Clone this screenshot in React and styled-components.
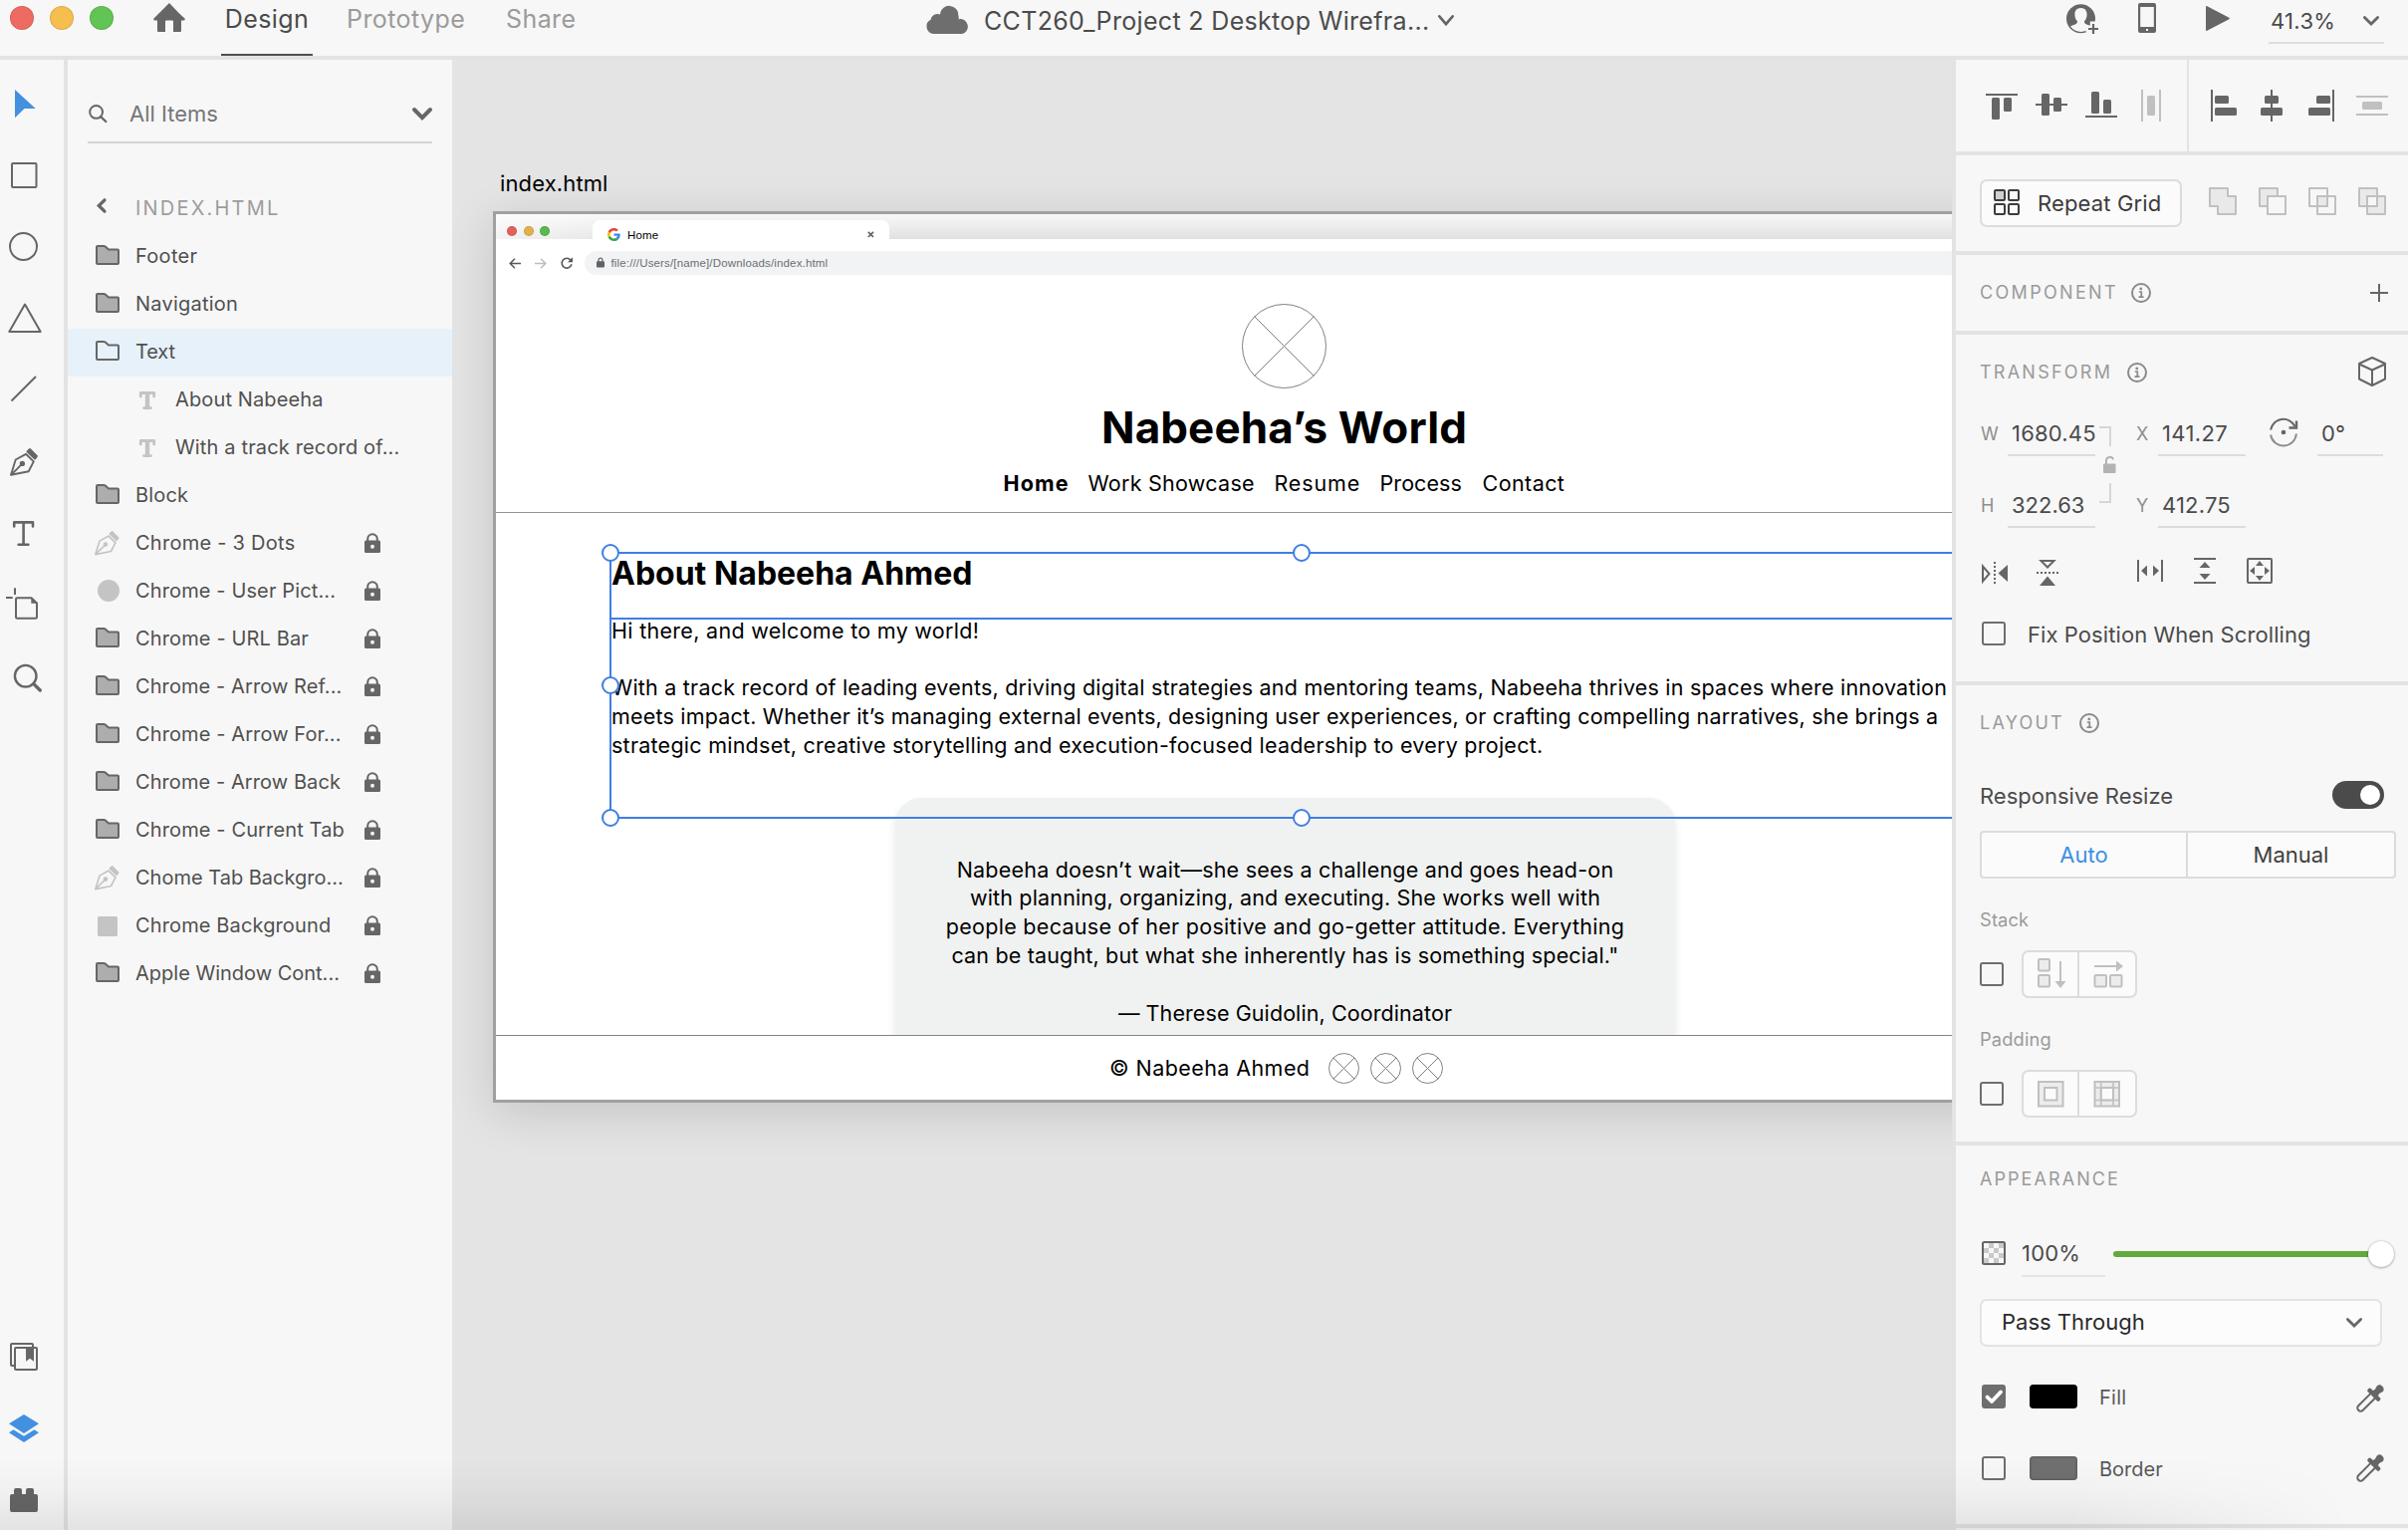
import React from "react";
import styled, { createGlobalStyle, css } from "styled-components";

const c = {
  bg: "#f7f7f7",
  line: "#e3e3e3",
  field: "#dcdcdc",
  icon: "#666666",
  off: "#c0c0c0",
  text: "#4b4b4b",
  muted: "#9a9a9a",
  blue: "#4390df",
  select: "#3f7ee3",
};

const Global = createGlobalStyle`
  * { box-sizing: border-box; }
  body { margin: 0; background: ${c.bg}; }
  svg { display: block; flex: none; overflow: visible; }
`;

const Window = styled.div`
  width: 2418px;
  height: 1536px;
  overflow: hidden;
  position: relative;
  display: flex;
  flex-direction: column;
  background: ${c.bg};
  font-family: Inter, "Liberation Sans", sans-serif;
  color: ${c.text};
`;

const Text = styled.span`
  display: block;
  flex: none;
  white-space: pre;
  font-size: ${(p) => p.$size || 22}px;
  line-height: ${(p) => p.$lh || 42}px;
  letter-spacing: ${(p) => p.$ls || 0}px;
  color: ${(p) => p.$color || "inherit"};
  font-weight: ${(p) => p.$weight || 400};
  ${(p) => p.$w && css`width: ${p.$w}px;`}
  ${(p) => p.$m && css`margin: ${p.$m};`}
`;
const Copy = styled(Text)`
  font-size: 21.5px;
`;

const Icon = styled.svg.attrs((p) => ({
  width: p.$w,
  height: p.$h,
  viewBox: `0 0 ${p.$w} ${p.$h}`,
  fill: "none",
}))`
  color: ${(p) => p.$color || c.icon};
  ${(p) => p.$m && css`margin: ${p.$m};`}
`;

/* ---------- top bar ---------- */
const TopBar = styled.header`
  flex: none;
  height: 60px;
  border-bottom: 4px solid ${c.line};
  display: grid;
  grid-template-columns: 930px 1145px 343px;
`;
const BarGroup = styled.div`
  display: flex;
  align-items: flex-start;
`;
const WindowDots = styled.div`
  display: flex;
  gap: ${(p) => p.$gap}px;
  margin: ${(p) => p.$m};
`;
const Dot = styled.i`
  width: ${(p) => p.$s}px;
  height: ${(p) => p.$s}px;
  border-radius: 50%;
  background: ${(p) => p.$c};
  box-shadow: inset 0 0 0 1px rgba(0, 0, 0, 0.1);
`;
const ModeTab = styled.div`
  width: ${(p) => p.$w}px;
  height: 56px;
  margin-left: ${(p) => p.$ml}px;
  text-align: ${(p) => (p.$active ? "center" : "left")};
  font-size: 25px;
  line-height: 39px;
  letter-spacing: 0.42px;
  color: ${(p) => (p.$active ? "#4b4b4b" : "#9b9b9b")};
  border-bottom: 2px solid ${(p) => (p.$active ? "#505050" : "transparent")};
`;
const ZoomField = styled.div`
  width: 116px;
  height: 44px;
  margin-left: 39px;
  padding: 0 5px 0 2px;
  display: flex;
  justify-content: space-between;
  border-bottom: 2px solid #dedede;
`;

const Body = styled.div`
  display: flex;
  height: 1476px;
`;

/* ---------- tool rail ---------- */
const Rail = styled.nav`
  flex: none;
  width: 68px;
  border-right: 4px solid ${c.line};
  padding-top: 8px;
  display: flex;
  flex-direction: column;
  justify-content: space-between;
  overflow: hidden;
  margin-bottom: -6px;
`;
const ToolGroup = styled.div`
  display: flex;
  flex-direction: column;
`;
const Tool = ({ children, color }) => (
  <Icon $w={64} $h={72} $color={color} stroke="currentColor" strokeWidth="2">
    {children}
  </Icon>
);

const PenShape = () => (
  <g stroke="currentColor" strokeWidth="1.9" strokeLinejoin="round">
    <path d="M1 26.8 L5.7 11.5 L16 5.8 L23.8 13.4 L18.7 23.3 Z" />
    <path d="M1 26.8 L12.3 15.6" />
    <circle cx="12.4" cy="15.4" r="1.7" fill="currentColor" />
    <path d="M17.5 3.2 L20 1 L27 8 L25 10.6 Z" fill="currentColor" />
  </g>
);
const Chevron = ({ w, h, sw, m }) => (
  <Icon $w={w} $h={h} $m={m}>
    <path
      d={`M${sw / 2} ${sw / 2} L${w / 2} ${h - sw * 0.7} L${w - sw / 2} ${sw / 2}`}
      stroke="currentColor"
      strokeWidth={sw}
      strokeLinecap="round"
    />
  </Icon>
);

/* ---------- layers panel ---------- */
const LayersPanel = styled.aside`
  flex: none;
  width: 386px;
`;
const SearchField = styled.div`
  margin: 26px 20px 0;
  height: 58px;
  padding-left: 1px;
  border-bottom: 2px solid #d3d3d3;
  display: flex;
  align-items: center;
`;
const BackRow = styled.div`
  height: 48px;
  margin-top: 41px;
  padding-left: 29px;
  display: flex;
  align-items: center;
`;
const LayerList = styled.div`
  padding-top: 1px;
`;
const LayerRow = styled.div`
  height: 48px;
  display: grid;
  grid-template-columns: ${(p) => (p.$nested ? "16px 20px 200px" : "24px 16px 230px 16px")};
  padding-left: ${(p) => (p.$nested ? 72 : 28)}px;
  align-items: center;
  background: ${(p) => (p.$selected ? "#e7f1fa" : "transparent")};
`;

const FolderIcon = ({ open }) => (
  <Icon $w={24} $h={20} $m="-4px 0 0">
    <path
      d="M1 18 V2 Q1 1 2 1 H8.2 Q9 1 9.8 1.6 L13 4.6 H22 Q23 4.6 23 5.6 V18 Q23 19 22 19 H2 Q1 19 1 18 Z"
      fill={open ? "none" : "#adadad"}
      stroke="currentColor"
      strokeWidth="2"
    />
  </Icon>
);
const LockIcon = () => (
  <Icon $w={16} $h={20} $m="-2px 0 0">
    <path d="M3.2 9 V6 a4.8 4.8 0 0 1 9.6 0 V9" stroke="currentColor" strokeWidth="2" />
    <rect y="7.5" width="16" height="12.5" rx="1.5" fill="currentColor" />
    <circle cx="8" cy="13.7" r="2" fill={c.bg} />
  </Icon>
);
const layerIcons = {
  folder: <FolderIcon />,
  open: <FolderIcon open />,
  text: (
    <Icon $w={16} $h={18} $color="#c4c4c4">
      <path d="M1.3 5 V1.5 H14.7 V5 M4.5 16.6 H11.5" stroke="currentColor" strokeWidth="2.8" strokeLinejoin="round" strokeLinecap="round" />
      <path d="M8 2 V16" stroke="currentColor" strokeWidth="4.4" />
    </Icon>
  ),
  pen: (
    <Icon $w={28} $h={28} $color="#c4c4c4" $m="-2px 0 0 -3px">
      <g transform="translate(2 2) scale(.88)"><PenShape /></g>
    </Icon>
  ),
  circle: (
    <Icon $w={24} $h={22} $color="#c4c4c4" $m="-2px 0 0"><circle cx="13" cy="11" r="11" fill="currentColor" /></Icon>
  ),
  square: (
    <Icon $w={24} $h={20} $color="#c4c4c4"><rect x="2" width="20" height="20" rx="1.5" fill="currentColor" /></Icon>
  ),
};
const layers = [
  { name: "Footer", icon: "folder", ls: 0.3 },
  { name: "Navigation", icon: "folder", ls: 0.23 },
  { name: "Text", icon: "open", selected: true, ls: -0.1 },
  { name: "About Nabeeha", icon: "text", nested: true, ls: 0.13 },
  { name: "With a track record of...", icon: "text", nested: true, ls: 0.15 },
  { name: "Block", icon: "folder", ls: 0.16 },
  { name: "Chrome - 3 Dots", icon: "pen", locked: true, ls: 0.26 },
  { name: "Chrome - User Pict...", icon: "circle", locked: true, ls: 0.13 },
  { name: "Chrome - URL Bar", icon: "folder", locked: true, ls: 0.14 },
  { name: "Chrome - Arrow Ref...", icon: "folder", locked: true, ls: 0.09 },
  { name: "Chrome - Arrow For...", icon: "folder", locked: true, ls: 0.11 },
  { name: "Chrome - Arrow Back", icon: "folder", locked: true, ls: 0.08 },
  { name: "Chrome - Current Tab", icon: "folder", locked: true, ls: 0.13 },
  { name: "Chome Tab Backgro...", icon: "pen", locked: true },
  { name: "Chrome Background", icon: "square", locked: true, ls: 0.13 },
  { name: "Apple Window Cont...", icon: "folder", locked: true },
];

/* ---------- canvas ---------- */
const Canvas = styled.main`
  flex: none;
  width: 1506px;
  padding-left: 41px;
  background: #e4e4e4;
  overflow: hidden;
`;
const Artboard = styled.section`
  position: relative;
  width: 1589px;
  height: 895px;
  margin-top: 13px;
  border: 3px solid #a0a0a0;
  background: #fff;
  box-shadow: 0 10px 44px rgba(0, 0, 0, 0.14);
  color: #000;
`;
const TabStrip = styled.div`
  position: relative;
  z-index: 1;
  height: 25px;
  display: flex;
  background: linear-gradient(100deg, rgba(255,255,255,.6), rgba(255,255,255,0) 10%), linear-gradient(#f8f8f8, #e1e1e1);
  font-family: "Liberation Sans", sans-serif;
`;
const BrowserTab = styled.div`
  width: 298px;
  height: 19px;
  margin: 6px 0 0 43px;
  padding: 0 15px;
  border-radius: 8px 8px 0 0;
  background: #fff;
  display: flex;
  align-items: flex-start;
`;
const AddressRow = styled.div`
  height: 48px;
  padding-left: 13px;
  display: flex;
  align-items: center;
  overflow: hidden;
  font-family: "Liberation Sans", sans-serif;
`;
const UrlPill = styled.div`
  flex: 1;
  height: 24px;
  margin: 0 40px 0 12px;
  padding-left: 12px;
  border-radius: 12px;
  background: #f1f3f4;
  display: flex;
  align-items: center;
`;
const SiteHeader = styled.div`
  height: 227px;
  padding-top: 17px;
  border-bottom: 1px solid #949494;
  display: flex;
  flex-direction: column;
  align-items: center;
`;
const SiteTitle = styled.h1`
  margin: 14px 0 0;
  font: 700 44px/51px Inter, sans-serif;
  letter-spacing: 0.1px;
`;
const SiteNav = styled.div`
  margin-top: 15px;
  display: grid;
  grid-template-columns: 85px 187px 106px 103px 83px;
`;
const SiteBody = styled.div`
  height: 524px;
  padding: 40px 0 0 116px;
  overflow: hidden;
`;
const SectionTitle = styled.h2`
  margin: 0;
  font: 700 32px/41px Inter, sans-serif;
`;
const Paragraph = styled.div`
  margin-top: ${(p) => p.$mt}px;
`;
const QuoteCard = styled.div`
  width: 783px;
  height: 260px;
  margin: 38px 0 0 285px;
  padding-top: 57.5px;
  border-radius: 26px 26px 0 0;
  background: #f0f2f1;
  box-shadow: 0 5px 8px rgba(0, 0, 0, 0.1);
  text-align: center;
`;
const SiteFooter = styled.div`
  height: 65px;
  padding-left: 616px;
  border-top: 1px solid #848484;
  display: flex;
  align-items: center;
`;
const FooterLinks = styled.div`
  display: flex;
  gap: 11px;
`;
const Placeholder = ({ size, k }) => {
  const r = size / 2;
  return (
    <Icon $w={size} $h={size} $color="#808080">
      <circle cx={r} cy={r} r={r - 0.5} stroke="currentColor" />
      <path d={`M${r - k} ${r - k} L${r + k} ${r + k} M${r + k} ${r - k} L${r - k} ${r + k}`} stroke="currentColor" />
    </Icon>
  );
};
const Selection = styled.div`
  position: absolute;
  z-index: 2;
  left: 114px;
  top: 339px;
  width: 1390px;
  height: 268px;
  border: 2px solid ${c.select};
  &::after {
    content: "";
    position: absolute;
    left: 0;
    right: 0;
    top: 64px;
    height: 2px;
    background: ${c.select};
  }
`;
const Handle = styled.i`
  position: absolute;
  z-index: 1;
  left: ${(p) => p.$x};
  top: ${(p) => p.$y};
  width: 18px;
  height: 18px;
  margin: -9px;
  border: 2px solid ${c.select};
  border-radius: 50%;
  background: #fff;
`;

/* ---------- property inspector ---------- */
const Inspector = styled.aside`
  flex: none;
  width: 458px;
  border-left: 4px solid ${c.line};
`;
const Section = styled.section`
  height: ${(p) => p.$h + 4}px;
  border-bottom: 4px solid ${c.line};
  padding-left: ${(p) => (p.$flush ? 0 : 24)}px;
  ${(p) => p.$row && css`display: flex; align-items: center;`}
`;
const AlignGroup = styled.div`
  height: 92px;
  display: flex;
  align-items: center;
  gap: 18px;
  width: ${(p) => p.$w}px;
  padding-left: ${(p) => p.$pl}px;
  border-right: ${(p) => (p.$rule ? 2 : 0)}px solid ${c.line};
`;
const Line = styled.div`
  display: flex;
  align-items: center;
  height: ${(p) => p.$h}px;
  margin-top: ${(p) => p.$mt || 0}px;
  padding-left: ${(p) => p.$pl || 0}px;
`;
const Push = styled.div`
  margin-left: auto;
  margin-right: ${(p) => p.$r}px;
`;
const Heading = ({ children, ls, w }) => (
  <Text $size={18} $lh={24} $ls={ls} $color={c.muted} $w={w}>{children}</Text>
);
const RepeatButton = styled.div`
  width: 203px;
  height: 48px;
  padding-left: 12px;
  border: 2px solid ${c.field};
  border-radius: 7px;
  background: #fbfbfb;
  display: flex;
  align-items: center;
`;
const BooleanGroup = styled.div`
  display: flex;
  gap: 22px;
  margin: -4px 0 0 27px;
`;
const FieldGrid = styled.div`
  margin-top: 3px;
  display: grid;
  grid-template-columns: 28px 88px 40px 23px 88px 24px 28px 20px 66px;
  grid-template-rows: 44px 44px;
  row-gap: 28px;
`;
const Field = styled.div`
  grid-column: ${(p) => p.$col};
  border-bottom: 2px solid ${(p) => p.$line || c.field};
  padding-left: ${(p) => (p.$pl === undefined ? 4 : p.$pl)}px;
  white-space: nowrap;
  font-size: 22px;
  line-height: ${(p) => p.$lh || 43}px;
  letter-spacing: ${(p) => p.$ls || 0}px;
  width: ${(p) => (p.$w ? p.$w + "px" : "auto")};
  height: 44px;
`;
const FieldLabel = styled.div`
  grid-column: ${(p) => p.$col};
  padding-left: 1px;
  font-size: 18px;
  line-height: 43px;
  color: #8e8e8e;
`;
const LinkCell = styled.div`
  grid-column: 3;
  grid-row: 1 / 3;
`;
const CheckBox = styled.div`
  flex: none;
  width: 24px;
  height: 24px;
  border: 2px solid #6e6e6e;
  border-radius: 3px;
  background: ${(p) => (p.$on ? "#6e6e6e" : "transparent")};
`;
const Toggle = styled.div`
  width: 52px;
  height: 28px;
  padding: 4px;
  border-radius: 14px;
  background: #4b4b4b;
  display: flex;
  justify-content: flex-end;
  &::after {
    content: "";
    width: 20px;
    border-radius: 50%;
    background: #fff;
  }
`;
const Segmented = styled.div`
  width: ${(p) => p.$w}px;
  height: 48px;
  margin-top: ${(p) => p.$mt || 0}px;
  margin-left: ${(p) => p.$ml || 0}px;
  border: 2px solid ${c.field};
  border-radius: ${(p) => p.$r}px;
  background: #fbfbfb;
  display: grid;
  grid-template-columns: ${(p) => p.$cols};
  color: #3f3f3f;
  text-align: center;
`;
const Segment = styled.div`
  height: 44px;
  border-left: ${(p) => (p.$rule ? 2 : 0)}px solid ${c.field};
  font-size: 22px;
  line-height: 45px;
  color: ${(p) => (p.$on ? "#3f8fe5" : "inherit")};
`;
const Slider = styled.div`
  position: relative;
  width: 269px;
  height: 6px;
  margin: -2px 0 0 8px;
  border-radius: 3px;
  background: #61aa3d;
  &::after {
    content: "";
    position: absolute;
    right: -13px;
    top: -10px;
    width: 26px;
    height: 26px;
    border-radius: 50%;
    background: #fff;
    box-shadow: 0 0 2px rgba(0, 0, 0, 0.25), 0 1px 3px rgba(0, 0, 0, 0.25);
  }
`;
const Select = styled.div`
  width: 404px;
  height: 48px;
  margin-top: 22px;
  padding: 0 18px 0 20px;
  border: 2px solid ${c.line};
  border-radius: 7px;
  background: #fcfcfc;
  display: flex;
  align-items: center;
  justify-content: space-between;
`;
const Swatch = styled.div`
  width: 48px;
  height: 24px;
  margin: 0 22px 0 24px;
  border-radius: 4px;
  background: ${(p) => p.$c};
  box-shadow: inset 0 0 3px rgba(0, 0, 0, 0.4);
`;
const BottomShade = styled.div`
  position: absolute;
  left: 0;
  bottom: 0;
  width: 2360px;
  height: 72px;
  background: linear-gradient(rgba(0, 0, 0, 0), rgba(0, 0, 0, 0.025) 45%, rgba(0, 0, 0, 0.08));
  mask-image: linear-gradient(to right, #000 88%, transparent);
  pointer-events: none;
`;

const Info = ({ m }) => (
  <Icon $w={20} $h={20} $color="#8a8a8a" $m={m}>
    <circle cx="10" cy="10" r="9" stroke="currentColor" strokeWidth="2" />
    <circle cx="9.8" cy="5.9" r="1.4" fill="currentColor" />
    <path d="M7.8 9 H10.3 V14 M7.5 14.2 H12.5" stroke="currentColor" strokeWidth="1.7" />
  </Icon>
);
const AlignIcon = ({ lines, bars, off }) => (
  <Icon $w={32} $h={32} $color={off ? c.off : c.icon}>
    {lines.map((r, i) => <rect key={"l" + i} x={r[0]} y={r[1]} width={r[2]} height={r[3]} fill="currentColor" />)}
    {bars.map((r, i) => <rect key={"b" + i} x={r[0]} y={r[1]} width={r[2]} height={r[3]} rx="1.5" fill="currentColor" />)}
  </Icon>
);
const Bool = ({ children }) => (
  <Icon $w={28} $h={28} $color={c.off} stroke="currentColor" strokeWidth="2" strokeLinejoin="round">{children}</Icon>
);
const Eyedropper = ({ dy }) => (
  <Icon $w={28} $h={28} $m={`${dy}px 0 0`}>
    <g transform="translate(14 14) rotate(45)">
      <path d="M-3.2 -4 V13.5 a3.2 3.2 0 0 0 6.4 0 V-4" stroke="currentColor" strokeWidth="2" />
      <rect x="-8.2" y="-7.6" width="16.4" height="4.4" rx="1.8" fill="currentColor" />
      <path d="M-4.6 -4 L-3 -10 L-4.2 -14 A4.3 4.3 0 0 1 4.2 -14 L3 -10 L4.6 -4 Z" fill="currentColor" />
    </g>
  </Icon>
);

export default function App() {
  return (
    <Window>
      <Global />
      <TopBar>
        <BarGroup>
          <WindowDots $gap={16} $m="6px 0 0 10px">
            <Dot $s={24} $c="#ed6b60" />
            <Dot $s={24} $c="#f5be4f" />
            <Dot $s={24} $c="#62c454" />
          </WindowDots>
          <Icon $w={32} $h={29} $m="3px 0 0 40px">
            <path d="M16 0 L25.5 10 L32 16 L31 17.5 H28 V28 Q28 29 27 29 H20 V18.5 Q20 17.5 19 17.5 H13 Q12 17.5 12 18.5 V29 H5 Q4 29 4 28 V17.5 H1 L0 16 Z" fill="currentColor" />
          </Icon>
          <ModeTab $active $w={92} $ml={36}>Design</ModeTab>
          <ModeTab $w={120} $ml={34}>Prototype</ModeTab>
          <ModeTab $w={80} $ml={40}>Share</ModeTab>
        </BarGroup>
        <BarGroup>
          <Icon $w={42} $h={27} $m="7px 0 0" $color="#6e6e6e">
            <path d="M7.5 27 A7.5 7.5 0 0 1 4.6 12.8 A7 7 0 0 1 14 7.4 A9.2 9.2 0 0 1 32.4 8.8 Q33 11 32.6 12.2 A7.5 7.5 0 0 1 36 27 Z" fill="currentColor" />
          </Icon>
          <Text $size={25} $ls={0.33} $w={446} $m="0 0 0 16px">CCT260_Project 2 Desktop Wirefra...</Text>
          <Chevron w={16} h={11} sw={2.6} m="15px 0 0 10px" />
        </BarGroup>
        <BarGroup>
          <Icon $w={33} $h={30} $m="4px 0 0">
            <circle cx="14.5" cy="14.7" r="14.5" fill="currentColor" />
            <path d="M14.5 4 C18.5 4 20.6 6.8 20.6 10.4 C20.6 13.4 19.4 16 18 17.3 C17.6 20.4 21 20.4 25 22.6 A13 13 0 0 1 4 22.6 C8 20.4 11.4 20.4 11 17.3 C9.6 16 8.4 13.4 8.4 10.4 C8.4 6.8 10.5 4 14.5 4 Z" fill={c.bg} />
            <path d="M27 17.5 V32 M19.5 25 H34" stroke={c.bg} strokeWidth="6.5" />
            <path d="M27 20 V30 M22 25 H32" stroke="currentColor" strokeWidth="2.2" />
          </Icon>
          <Icon $w={18} $h={30} $m="3px 0 0 39px">
            <path fillRule="evenodd" d="M2 0 H16 Q18 0 18 2 V28 Q18 30 16 30 H2 Q0 30 0 28 V2 Q0 0 2 0 Z M2.2 4 V24 H15.8 V4 Z M8 26 V28 H10 V26 Z" fill="currentColor" />
          </Icon>
          <Icon $w={24} $h={25} $m="6px 0 0 50px">
            <path d="M0 1 Q0 -.3 1.3 .3 L23.4 11.8 Q24.4 12.5 23.4 13.2 L1.3 24.7 Q0 25.3 0 24 Z" fill="currentColor" />
          </Icon>
          <ZoomField>
            <Text $ls={0.3}>41.3%</Text>
            <Chevron w={16} h={10} sw={2.8} m="16px 0 0" />
          </ZoomField>
        </BarGroup>
      </TopBar>

      <Body>
        <Rail>
          <ToolGroup>
            <Tool color={c.blue}><path d="M15 22 L35.7 41 H24.5 L15 50.3 Z" fill="currentColor" stroke="none" /></Tool>
            <Tool><rect x="12" y="24" width="24.5" height="24" rx="1" /></Tool>
            <Tool><circle cx="23.5" cy="35.5" r="13.5" /></Tool>
            <Tool><path d="M25 21.5 L40.7 49 H9.3 Z" strokeLinejoin="round" /></Tool>
            <Tool><path d="M11.5 46.5 L36 22" /></Tool>
            <Tool><g transform="translate(10 22)"><PenShape /></g></Tool>
            <Tool><path d="M14.2 28.5 V24.4 H33 V28.5 M23.6 25 V46.5 M18.6 46.8 H28.4" strokeWidth="2.6" strokeLinejoin="round" strokeLinecap="round" /></Tool>
            <Tool>
              <path d="M6 28 H12.7 M15 18.2 V25" />
              <path d="M17.3 28.3 H31.5 L37 33.5 V47.5 Q37 48.8 35.8 48.8 H17.2 Q16 48.8 16 47.5 V29.5 Q16 28.3 17.3 28.3 Z" />
              <path d="M31.3 28 V33.7 H37.5 Z" fill="currentColor" stroke="none" />
            </Tool>
            <Tool>
              <circle cx="25.7" cy="34.7" r="10.8" strokeWidth="2.4" />
              <path d="M33.8 42.6 L40.3 49" strokeWidth="3.4" strokeLinecap="round" />
            </Tool>
          </ToolGroup>
          <ToolGroup>
            <Tool>
              <path d="M15 45 H12 Q11 45 11 44 V24 Q11 23 12 23 H32 Q33 23 33 24 V27" />
              <rect x="15" y="27" width="22" height="22" rx="1" />
              <path d="M26 27 H34 V40.8 L30 37.8 L26 40.8 Z" fill="currentColor" stroke="none" />
            </Tool>
            <Tool color={c.blue}>
              <g fill="currentColor" stroke="none">
                <path d="M24 22 L39 31.3 L24 41 L9 31.3 Z" />
                <path d="M9 40.2 L13.5 37.2 L24 43.8 L34.5 37.2 L39 40.2 L24 50 Z" />
              </g>
            </Tool>
            <Tool>
              <path d="M12 30 H14 V26 Q14 24 16 24 H20 Q22 24 22 26 V30 H26 V26 Q26 24 28 24 H32 Q34 24 34 26 V30 H36 Q38 30 38 32 V46 Q38 48 36 48 H12 Q10 48 10 46 V32 Q10 30 12 30 Z" fill="currentColor" stroke="none" />
            </Tool>
          </ToolGroup>
        </Rail>

        <LayersPanel>
          <SearchField>
            <Icon $w={19} $h={18}>
              <circle cx="7.6" cy="7.4" r="6.4" stroke="currentColor" strokeWidth="2" />
              <path d="M12 12 L17.3 17" stroke="currentColor" strokeWidth="2.4" strokeLinecap="round" />
            </Icon>
            <Text $color="#767676" $m="0 0 0 22px">All Items</Text>
            <Push $r={0}><Chevron w={20} h={13} sw={4} /></Push>
          </SearchField>
          <BackRow>
            <Icon $w={10} $h={15} $m="-5px 29px 0 0">
              <path d="M8 1.8 L2.2 7.5 L8 13.2" stroke="currentColor" strokeWidth="3.2" strokeLinecap="round" />
            </Icon>
            <Text $size={20} $ls={2.2} $color="#9d9d9d">INDEX.HTML</Text>
          </BackRow>
          <LayerList>
            {layers.map((l) => (
              <LayerRow key={l.name} $nested={l.nested} $selected={l.selected}>
                {layerIcons[l.icon]}
                <span />
                <Text $size={20} $ls={l.ls} $lh={46} $color="#505050" $m="0 0 2px">{l.name}</Text>
                {l.locked && <LockIcon />}
              </LayerRow>
            ))}
          </LayerList>
        </LayersPanel>

        <Canvas>
          <Text $lh={30} $ls={0.13} $color="#000" $m="109px 0 0 7px">index.html</Text>
          <Artboard>
            <TabStrip>
              <WindowDots $gap={6.5} $m="11.5px 0 0 11px">
                <Dot $s={10} $c="#e0625a" />
                <Dot $s={10} $c="#e3b14b" />
                <Dot $s={10} $c="#58b94e" />
              </WindowDots>
              <BrowserTab>
                <Icon $w={13} $h={13} $m="8px 0 0">
                  <g transform="scale(.2708)">
                    <path fill="#EA4335" d="M24 9.5c3.54 0 6.71 1.22 9.21 3.6l6.85-6.85C35.9 2.38 30.47 0 24 0 14.62 0 6.51 5.38 2.56 13.22l7.98 6.19C12.43 13.72 17.74 9.5 24 9.5z" />
                    <path fill="#4285F4" d="M46.98 24.55c0-1.57-.15-3.09-.38-4.55H24v9.02h12.94c-.58 2.96-2.26 5.48-4.78 7.18l7.73 6c4.51-4.18 7.09-10.36 7.09-17.65z" />
                    <path fill="#FBBC05" d="M10.53 28.59c-.48-1.45-.76-2.99-.76-4.59s.27-3.14.76-4.59l-7.98-6.19C.92 16.46 0 20.12 0 24c0 3.88.92 7.54 2.56 10.78l7.97-6.19z" />
                    <path fill="#34A853" d="M24 48c6.48 0 11.93-2.13 15.89-5.81l-7.73-6c-2.15 1.45-4.92 2.3-8.16 2.3-6.26 0-11.57-4.22-13.47-9.91l-7.98 6.19C6.51 42.62 14.62 48 24 48z" />
                  </g>
                </Icon>
                <Text $size={11.5} $lh={30} $ls={0.15} $m="0 0 0 7px">Home</Text>
                <Push $r={0}>
                  <Icon $w={7} $h={7} $m="11px 0 0" $color="#5f6368"><path d="M.8 .8 L6 6 M6 .8 L.8 6" stroke="currentColor" strokeWidth="1.7" /></Icon>
                </Push>
              </BrowserTab>
            </TabStrip>
            <AddressRow>
              <Icon $w={12} $h={11} $color="#55585c"><path d="M12 5.5 H1.5 M6 .7 L1.2 5.5 L6 10.3" stroke="currentColor" strokeWidth="1.5" /></Icon>
              <Icon $w={12} $h={11} $m="0 0 0 14px" $color="#bdbdbd"><path d="M0 5.5 H10.5 M6 .7 L10.8 5.5 L6 10.3" stroke="currentColor" strokeWidth="1.5" /></Icon>
              <Icon $w={12} $h={12} $m="0 0 0 14px" $color="#55585c">
                <path d="M10 3.2 A4.9 4.9 0 1 0 10.9 7.3" stroke="currentColor" strokeWidth="1.6" />
                <path d="M12 .2 V5.2 H7 Z" fill="currentColor" />
              </Icon>
              <UrlPill>
                <Icon $w={8} $h={11} $m="-1px 0 0" $color="#5f6368">
                  <path d="M2 5 V3.2 a2 2 0 0 1 4 0 V5" stroke="currentColor" strokeWidth="1.2" />
                  <rect y="4.2" width="8" height="6.4" rx="1" fill="currentColor" />
                </Icon>
                <Text $size={11.5} $lh={24} $ls={0.15} $color="#6c6f73" $m="0 0 0 6.5px">file:///Users/[name]/Downloads/index.html</Text>
              </UrlPill>
            </AddressRow>

            <SiteHeader>
              <Placeholder size={85} k={30} />
              <SiteTitle>Nabeeha’s World</SiteTitle>
              <SiteNav>
                <Copy $lh={30} $ls={1.1} $weight={700}>Home</Copy>
                <Copy $lh={30} $ls={0.26}>Work Showcase</Copy>
                <Copy $lh={30} $ls={0.85}>Resume</Copy>
                <Copy $lh={30} $ls={0.08}>Process</Copy>
                <Copy $lh={30} $ls={0.43}>Contact</Copy>
              </SiteNav>
            </SiteHeader>

            <SiteBody>
              <SectionTitle>About Nabeeha Ahmed</SectionTitle>
              <Paragraph $mt={23}>
                <Copy $lh={29} $ls={0.3}>Hi there, and welcome to my world!</Copy>
              </Paragraph>
              <Paragraph $mt={28}>
                <Copy $lh={29} $ls={0.218}>With a track record of leading events, driving digital strategies and mentoring teams, Nabeeha thrives in spaces where innovation</Copy>
                <Copy $lh={29} $ls={0.188}>meets impact. Whether it’s managing external events, designing user experiences, or crafting compelling narratives, she brings a</Copy>
                <Copy $lh={29} $ls={0.25}>strategic mindset, creative storytelling and execution-focused leadership to every project.</Copy>
              </Paragraph>
              <QuoteCard>
                <Copy $lh={28.8} $ls={0.215}>Nabeeha doesn’t wait—she sees a challenge and goes head-on</Copy>
                <Copy $lh={28.8} $ls={0.155}>with planning, organizing, and executing. She works well with</Copy>
                <Copy $lh={28.8} $ls={0.285}>people because of her positive and go-getter attitude. Everything</Copy>
                <Copy $lh={28.8} $ls={0.165}>can be taught, but what she inherently has is something special."</Copy>
                <Copy $lh={28.8} $ls={0.089} $m="29px 0 0">— Therese Guidolin, Coordinator</Copy>
              </QuoteCard>
            </SiteBody>

            <SiteFooter>
              <Copy $lh={30} $ls={0.42} $w={220}>© Nabeeha Ahmed</Copy>
              <FooterLinks>
                <Placeholder size={31} k={10.5} />
                <Placeholder size={31} k={10.5} />
                <Placeholder size={31} k={10.5} />
              </FooterLinks>
            </SiteFooter>

            <Selection>
              <Handle $x="-1px" $y="-1px" />
              <Handle $x="50%" $y="-1px" />
              <Handle $x="-1px" $y="50%" />
              <Handle $x="-1px" $y="calc(100% + 1px)" />
              <Handle $x="50%" $y="calc(100% + 1px)" />
            </Selection>
          </Artboard>
        </Canvas>

        <Inspector>
          <Section $h={92} $flush $row>
            <AlignGroup $w={234} $pl={30} $rule>
              <AlignIcon lines={[[0, 4, 32, 2]]} bars={[[6, 8, 8, 22], [18, 8, 8, 14]]} />
              <AlignIcon lines={[[0, 14, 32, 2]]} bars={[[6, 4, 8, 22], [18, 8, 8, 14]]} />
              <AlignIcon lines={[[0, 26, 32, 2]]} bars={[[6, 2, 8, 22], [18, 10, 8, 14]]} />
              <AlignIcon off lines={[[6, 0, 2, 32], [24, 0, 2, 32]]} bars={[[12, 6, 8, 20]]} />
            </AlignGroup>
            <AlignGroup $w={220} $pl={18}>
              <AlignIcon lines={[[4, 0, 2, 32]]} bars={[[8, 6, 14, 8], [8, 18, 22, 8]]} />
              <AlignIcon lines={[[14, 0, 2, 32]]} bars={[[8, 6, 14, 8], [4, 18, 22, 8]]} />
              <AlignIcon lines={[[26, 0, 2, 32]]} bars={[[10, 6, 14, 8], [2, 18, 22, 8]]} />
              <AlignIcon off lines={[[0, 6, 32, 2], [0, 24, 32, 2]]} bars={[[6, 12, 20, 8]]} />
            </AlignGroup>
          </Section>

          <Section $h={96} $row>
            <RepeatButton>
              <Icon $w={26} $h={26} $color="#3c3c3c" $m="-2px 0 0" stroke="currentColor" strokeWidth="2">
                <rect x="1" y="1" width="10" height="10" rx="1" fill="#cfcfcf" />
                <rect x="15" y="1" width="10" height="10" rx="1" />
                <rect x="1" y="15" width="10" height="10" rx="1" />
                <rect x="15" y="15" width="10" height="10" rx="1" />
              </Icon>
              <Text $ls={0.15} $color="#3c3c3c" $m="0 0 0 18px">Repeat Grid</Text>
            </RepeatButton>
            <BooleanGroup>
              <Bool><path d="M1 1 H19 V9 H27 V27 H9 V19 H1 Z" fill="#e9e9e9" /></Bool>
              <Bool>
                <path d="M9 19 H1 V1 H19 V9" fill="#e9e9e9" />
                <rect x="9" y="9" width="18" height="18" fill={c.bg} />
              </Bool>
              <Bool>
                <rect x="1" y="1" width="18" height="18" />
                <rect x="9" y="9" width="18" height="18" />
                <rect x="9" y="9" width="10" height="10" fill="#e9e9e9" />
              </Bool>
              <Bool>
                <rect x="1" y="1" width="18" height="18" fill="#e9e9e9" />
                <rect x="9" y="9" width="18" height="18" fill="#e9e9e9" />
                <rect x="9" y="9" width="10" height="10" fill={c.bg} />
              </Bool>
            </BooleanGroup>
          </Section>

          <Section $h={76} $row>
            <Heading ls={2.33} w={152}>COMPONENT</Heading>
            <Info />
            <Push $r={20}>
              <Icon $w={18} $h={18}><path d="M9 0 V18 M0 9 H18" stroke="currentColor" strokeWidth="2" /></Icon>
            </Push>
          </Section>

          <Section $h={348}>
            <Line $h={75}>
              <Heading ls={2.25} w={148}>TRANSFORM</Heading>
              <Info />
              <Push $r={22}>
                <Icon $w={28} $h={30} $m="-2px 0 0" stroke="currentColor" strokeWidth="2" strokeLinejoin="round">
                  <path d="M14 1 L27 7 V22.5 L14 29 L1 22.5 V7 Z M1 7.5 L14 13.5 L27 7.5 M14 13.5 V29" />
                </Icon>
              </Push>
            </Line>
            <FieldGrid>
              <FieldLabel>W</FieldLabel>
              <Field $ls={0.2}>1680.45</Field>
              <LinkCell>
                <Icon $w={40} $h={116} $color="#d6d6d6">
                  <path d="M4 15 H15 V34 M15 71 V90 H4" stroke="currentColor" strokeWidth="2" />
                  <g color="#b3b3b3">
                    <rect x="8" y="51.5" width="12.5" height="9.5" rx="1" fill="currentColor" />
                    <path d="M11 52 V48.5 a3.6 3.6 0 0 1 7 -1.2" stroke="currentColor" strokeWidth="2" />
                  </g>
                </Icon>
              </LinkCell>
              <FieldLabel $col={4}>X</FieldLabel>
              <Field $ls={0.37}>141.27</Field>
              <span />
              <Icon $w={28} $h={28} $m="6px 0 0">
                <path d="M1.1 11.5 A13 13 0 0 1 25.5 8" stroke="currentColor" strokeWidth="2" />
                <path d="M1.1 16.5 A13 13 0 0 0 26.9 15.5" stroke="#8e8e8e" strokeWidth="2" />
                <path d="M27 2.5 V9.5 H19.5" stroke="currentColor" strokeWidth="2.4" />
                <circle cx="14" cy="14" r="2.3" fill="currentColor" />
              </Icon>
              <span />
              <Field>0°</Field>
              <FieldLabel $col={1}>H</FieldLabel>
              <Field $col={2}>322.63</Field>
              <FieldLabel $col={4}>Y</FieldLabel>
              <Field $ls={0.18}>412.75</Field>
            </FieldGrid>
            <Line $h={32} $mt={28}>
              <Icon $w={32} $h={32} $m="0 20px 0 0">
                <path d="M3 10.5 V25.5 L9.5 18 Z" stroke="currentColor" strokeWidth="2" />
                <path d="M28 9 V26 L18.5 17.5 Z" fill="currentColor" />
                <path d="M15 6 V28" stroke="currentColor" strokeWidth="2" strokeDasharray="2 2" />
              </Icon>
              <Icon $w={32} $h={32} $m="0 71px 0 0">
                <path d="M9.5 5 H22.5 L16 11.5 Z" stroke="currentColor" strokeWidth="2" />
                <path d="M8 30 H24 L16 20.5 Z" fill="currentColor" />
                <path d="M5 17 H27" stroke="currentColor" strokeWidth="2" strokeDasharray="2 2" />
              </Icon>
              <Icon $w={32} $h={32} $m="0 23px 0 0">
                <path d="M4 4 V26 M28 4 V26" stroke="currentColor" strokeWidth="2" />
                <path d="M7 15 L13 9.5 V20.5 Z M25 15 L19 9.5 V20.5 Z" fill="currentColor" />
              </Icon>
              <Icon $w={32} $h={32} $m="0 23px 0 0">
                <path d="M5 3 H27 M5 27 H27" stroke="currentColor" strokeWidth="2" />
                <path d="M16 6 L21.5 12 H10.5 Z M16 24 L21.5 18 H10.5 Z" fill="currentColor" />
              </Icon>
              <Icon $w={32} $h={32}>
                <rect x="4" y="3" width="24" height="24" rx="1" stroke="currentColor" strokeWidth="2" />
                <path d="M16 5 L20 10 H12 Z M16 25 L20 20 H12 Z M6 15 L11 11 V19 Z M26 15 L21 11 V19 Z" fill="currentColor" />
              </Icon>
            </Line>
            <Line $h={24} $mt={34} $pl={2}>
              <CheckBox />
              <Text $ls={0.08} $m="2px 0 0 22px">Fix Position When Scrolling</Text>
            </Line>
          </Section>

          <Section $h={458}>
            <Line $h={76}>
              <Heading ls={2.2} w={100}>LAYOUT</Heading>
              <Info />
            </Line>
            <Line $h={28} $mt={20}>
              <Text $m="2px 0 0">Responsive Resize</Text>
              <Push $r={24}><Toggle /></Push>
            </Line>
            <Segmented $w={418} $mt={22} $r={4} $cols="205px 1fr">
              <Segment $on>Auto</Segment>
              <Segment $rule>Manual</Segment>
            </Segmented>
            <Text $size={18.3} $lh={20} $ls={0.15} $color={c.muted} $m="31px 0 21px">Stack</Text>
            <Line $h={48}>
              <CheckBox />
              <Segmented $w={116} $ml={18} $r={7} $cols="54px 1fr">
                <Segment>
                  <Icon $w={54} $h={44} $color={c.off}>
                    <g fill="#ececec" stroke="currentColor" strokeWidth="2">
                      <rect x="15" y="7" width="11" height="11.5" rx="1" />
                      <rect x="15" y="23" width="11" height="11.5" rx="1" />
                    </g>
                    <path d="M37 9 V30" stroke="currentColor" strokeWidth="2" />
                    <path d="M31.5 29 H42.5 L37 36 Z" fill="currentColor" />
                  </Icon>
                </Segment>
                <Segment $rule>
                  <Icon $w={56} $h={44} $color={c.off}>
                    <g fill="#ececec" stroke="currentColor" strokeWidth="2">
                      <rect x="15.5" y="23" width="11.5" height="11.5" rx="1" />
                      <rect x="31" y="23" width="11.5" height="11.5" rx="1" />
                    </g>
                    <path d="M15 14 H38" stroke="currentColor" strokeWidth="2" />
                    <path d="M37 8.5 V19.5 L44 14 Z" fill="currentColor" />
                  </Icon>
                </Segment>
              </Segmented>
            </Line>
            <Text $size={18.3} $lh={20} $ls={0.15} $color={c.muted} $m="31px 0 21px">Padding</Text>
            <Line $h={48}>
              <CheckBox />
              <Segmented $w={116} $ml={18} $r={7} $cols="54px 1fr">
                <Segment>
                  <Icon $w={54} $h={44} $color={c.off} stroke="currentColor" strokeWidth="2">
                    <rect x="15" y="10" width="24.5" height="24.5" fill="#ececec" />
                    <rect x="21" y="16" width="12.5" height="12.5" fill="#fbfbfb" />
                  </Icon>
                </Segment>
                <Segment $rule>
                  <Icon $w={56} $h={44} $color={c.off} stroke="currentColor" strokeWidth="2">
                    <rect x="15.5" y="10" width="24.5" height="24.5" fill="#ececec" />
                    <rect x="21.7" y="16" width="12.3" height="12.5" fill="#fbfbfb" />
                    <path d="M21.7 10 V34.5 M34 10 V34.5 M15.5 16 H40 M15.5 28.5 H40" strokeWidth="1.6" />
                  </Icon>
                </Segment>
              </Segmented>
            </Line>
          </Section>

          <Section $h={380}>
            <Line $h={67}>
              <Heading ls={2.07}>APPEARANCE</Heading>
            </Line>
            <Line $h={44} $mt={21} $pl={2}>
              <Icon $w={24} $h={24} $m="-4px 16px 0 0">
                <g fill="#c9c9c9">
                  <path d="M7 2h5v5h-5z M17 2h5v5h-5z M2 7h5v5h-5z M12 7h5v5h-5z M7 12h5v5h-5z M17 12h5v5h-5z M2 17h5v5h-5z M12 17h5v5h-5z" />
                </g>
                <rect x="1" y="1" width="22" height="22" rx="1.5" stroke="currentColor" strokeWidth="2" />
              </Icon>
              <Field $ls={0.2} $pl={0} $w={84} $lh={41} $line={c.line}>100%</Field>
              <Slider />
            </Line>
            <Select>
              <Text $color="#2a2a2a" $lh={40} $m="0 0 2px">Pass Through</Text>
              <Chevron w={16} h={10} sw={2.8} />
            </Select>
            <Line $h={28} $mt={36} $pl={2}>
              <CheckBox $on>
                <Icon $w={20} $h={20}><path d="M3.5 10.5 L8 15 L17 5.5" stroke="#fff" strokeWidth="3.8" strokeLinecap="round" strokeLinejoin="round" /></Icon>
              </CheckBox>
              <Swatch $c="#000" />
              <Text $size={20} $lh={28} $ls={0.27} $color="#5a5a5a" $m="2px 0 0">Fill</Text>
              <Push $r={24}><Eyedropper dy={4} /></Push>
            </Line>
            <Line $h={28} $mt={44} $pl={2}>
              <CheckBox />
              <Swatch $c="#707070" />
              <Text $size={20} $lh={28} $color="#5a5a5a" $m="2px 0 0">Border</Text>
              <Push $r={24}><Eyedropper dy={0} /></Push>
            </Line>
          </Section>
        </Inspector>
      </Body>
      <BottomShade />
    </Window>
  );
}
